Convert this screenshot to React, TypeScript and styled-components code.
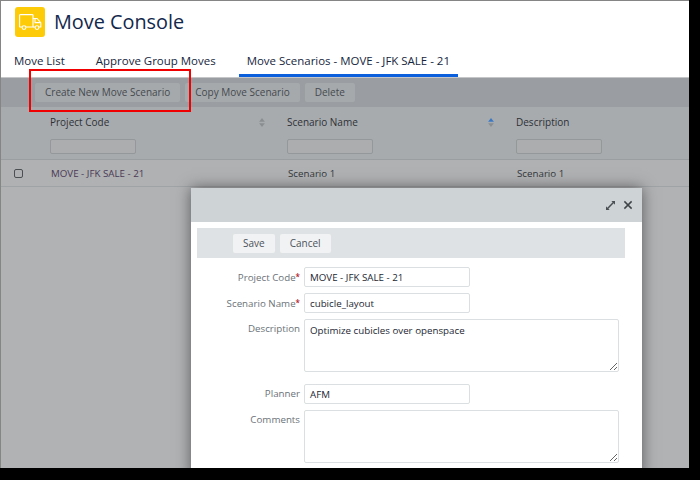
import { createGlobalStyle } from 'styled-components';
import styled from 'styled-components';

const GlobalStyle = createGlobalStyle`
  html, body {
    margin: 0;
    padding: 0;
    height: 480px;
    background: #000;
    overflow: hidden;
  }
  body, input, textarea, button {
    font-family: 'Open Sans', 'Liberation Sans', sans-serif;
  }
`;

const Screen = styled.div`
  position: relative;
  width: 689px;
  height: 468px;
  overflow: hidden;
  box-sizing: border-box;
  background: #b1b2b4;
  border-top: 1px solid #858585;
  border-left: 1px solid #858585;
  display: flex;
  flex-direction: column;
`;

const Header = styled.header`
  background: #fff;
  height: 76px;
  flex: none;
  box-sizing: border-box;
  display: flex;
  flex-direction: column;
`;

const TitleRow = styled.div`
  display: flex;
  align-items: center;
  gap: 9px;
  padding: 6px 0 0 14px;
  height: 30px;
`;

const Logo = styled.div`
  width: 30px;
  height: 30px;
  border-radius: 3px;
  background: #fdcb08;
  display: flex;
  align-items: center;
  justify-content: center;
`;

const Title = styled.h1`
  margin: 0;
  font-size: 19.85px;
  line-height: 30px;
  font-weight: 500;
  color: #12284c;
`;

const Tabs = styled.nav`
  display: flex;
  margin-top: 8px;
  padding-left: 13px;
`;

const Tab = styled.div<{ $active?: boolean; $gap: number }>`
  height: 32px;
  box-sizing: border-box;
  margin-right: ${p => p.$gap}px;
  padding: ${p => (p.$active ? '0 8px' : '0')};
  border-bottom: 3px solid ${p => (p.$active ? '#0b5fdc' : 'transparent')};
  font-size: 11.47px;
  line-height: 31px;
  font-weight: 500;
  color: #16263d;
  white-space: nowrap;
`;

const Toolbar = styled.div`
  flex: none;
  height: 30px;
  box-sizing: border-box;
  border-top: 1px solid #c5c6c8;
  background: #9a9da1;
  display: flex;
  align-items: center;
  gap: 5px;
  padding-left: 34px;
`;

const DimButton = styled.div`
  height: 19px;
  padding: 0 10px;
  border-radius: 2px;
  background: #a6a9ac;
  color: #44494f;
  font-size: 10px;
  line-height: 19px;
  font-weight: 500;
  white-space: nowrap;
`;

const TableHead = styled.div`
  flex: none;
  height: 53px;
  box-sizing: border-box;
  background: #a8abae;
  border-bottom: 1px solid #9b9ea1;
  display: grid;
  grid-template-columns: 49px 237px 229px 1fr;
`;

const HeadCell = styled.div<{ $col: number }>`
  grid-column: ${p => p.$col};
  display: flex;
  flex-direction: column;
  gap: 10px;
  padding-top: 8px;
  position: relative;
`;

const HeadLabel = styled.div`
  font-size: 10px;
  line-height: 14px;
  font-weight: 500;
  color: #2d3136;
`;

const SortIcon = styled.svg`
  position: absolute;
  right: 22px;
  top: 11px;
`;

const FilterBox = styled.div`
  width: 86px;
  height: 15px;
  box-sizing: border-box;
  border: 1px solid #94989b;
  border-radius: 2px;
  background: #acadae;
`;

const TableRow = styled.div`
  flex: none;
  height: 27px;
  box-sizing: border-box;
  background: #b0b1b3;
  border-bottom: 1px solid #a0a3a5;
  display: grid;
  grid-template-columns: 13px 36px 237px 229px 1fr;
  align-items: center;
`;

const CheckBox = styled.div`
  grid-column: 2;
  width: 9px;
  height: 9px;
  box-sizing: border-box;
  border: 1px solid #4c4f52;
  border-radius: 2px;
`;

const RowCell = styled.div<{ $purple?: boolean }>`
  font-size: 9.75px;
  color: ${p => (p.$purple ? '#4a3a55' : '#33373b')};
  white-space: nowrap;
  padding-left: 1px;
`;

const Modal = styled.section`
  position: absolute;
  left: 190px;
  top: 187px;
  width: 451px;
  height: 290px;
  background: #fff;
  box-shadow: 0 0 14px rgba(0, 0, 0, 0.5);
`;

const ModalHeader = styled.div`
  height: 34px;
  background: #ced3d6;
  display: flex;
  align-items: center;
  justify-content: flex-end;
  gap: 8px;
  padding-right: 9px;
`;

const ModalBody = styled.div`
  padding: 6px 17px 0 6px;
`;

const ModalToolbar = styled.div`
  height: 30px;
  background: #dfe2e4;
  display: flex;
  align-items: center;
  gap: 5px;
  padding-left: 36px;
`;

const LightButton = styled.button`
  height: 19px;
  padding: 0 10px;
  border: 0;
  border-radius: 2px;
  background: #f1f2f3;
  color: #4b5159;
  font-size: 10px;
  line-height: 19px;
  font-weight: 500;
`;

const Form = styled.div`
  display: grid;
  grid-template-columns: 103px 1fr;
  column-gap: 4px;
  row-gap: 6px;
  margin-top: 9px;
`;

const Label = styled.label<{ $spaced?: boolean }>`
  font-size: 9.75px;
  line-height: 19px;
  color: #6b7278;
  text-align: right;
  white-space: nowrap;
  margin-top: ${p => (p.$spaced ? '6px' : '0')};

  b {
    color: #b3202c;
    font-size: 8px;
    font-weight: 600;
    vertical-align: 1px;
  }
`;

const Field = styled.div<{ $spaced?: boolean }>`
  width: 166px;
  height: 20px;
  box-sizing: border-box;
  border: 1px solid #dcdfe1;
  border-radius: 2px;
  padding-left: 5px;
  font-size: 9.75px;
  line-height: 19px;
  color: #1d2733;
  margin-top: ${p => (p.$spaced ? '6px' : '0')};
`;

const Area = styled.textarea`
  display: block;
  width: 315px;
  height: 53px;
  box-sizing: border-box;
  border: 1px solid #dcdfe1;
  border-radius: 2px;
  padding: 4px 5px;
  margin: 0;
  font-size: 9.75px;
  line-height: 14px;
  color: #1d2733;
  outline: none;
`;

const Highlight = styled.div`
  position: absolute;
  left: 28px;
  top: 68px;
  width: 162px;
  height: 43px;
  box-sizing: border-box;
  border: 2px solid #f00000;
`;

function TruckIcon() {
  return (
    <svg width="23" height="17" viewBox="0 0 23 17" fill="none" stroke="#fff" strokeWidth="1.1">
      <path d="M3 13H1.2a.6.6 0 0 1-.6-.6V1.2a.6.6 0 0 1 .6-.6h12.2a.6.6 0 0 1 .6.6V13H7" />
      <path d="M14 4.5h4l3.8 4.2V13H20M16 13h-2" />
      <path d="M16 5v3.6h5" />
      <circle cx="5" cy="13.6" r="1.9" />
      <circle cx="18" cy="13.6" r="1.9" />
    </svg>
  );
}

function SortArrows({ active }: { active?: boolean }) {
  return (
    <SortIcon width="6" height="9" viewBox="0 0 7 11">
      <path d="M3.5 0 7 4.5H0Z" fill={active ? '#3b78c4' : '#8b8e91'} />
      <path d="M3.5 11 7 6.5H0Z" fill="#8b8e91" />
    </SortIcon>
  );
}

export default function App() {
  return (
    <>
      <GlobalStyle />
      <Screen>
        <Header>
          <TitleRow>
            <Logo>
              <TruckIcon />
            </Logo>
            <Title>Move Console</Title>
          </TitleRow>
          <Tabs>
            <Tab $gap={31}>Move List</Tab>
            <Tab $gap={23}>Approve Group Moves</Tab>
            <Tab $gap={0} $active>
              Move Scenarios - MOVE - JFK SALE - 21
            </Tab>
          </Tabs>
        </Header>

        <Toolbar>
          <DimButton>Create New Move Scenario</DimButton>
          <DimButton>Copy Move Scenario</DimButton>
          <DimButton>Delete</DimButton>
        </Toolbar>

        <TableHead>
          <HeadCell $col={2}>
            <HeadLabel>Project Code</HeadLabel>
            <FilterBox />
            <SortArrows />
          </HeadCell>
          <HeadCell $col={3}>
            <HeadLabel>Scenario Name</HeadLabel>
            <FilterBox />
            <SortArrows active />
          </HeadCell>
          <HeadCell $col={4}>
            <HeadLabel>Description</HeadLabel>
            <FilterBox />
          </HeadCell>
        </TableHead>

        <TableRow>
          <CheckBox />
          <RowCell $purple>MOVE - JFK SALE - 21</RowCell>
          <RowCell>Scenario 1</RowCell>
          <RowCell>Scenario 1</RowCell>
        </TableRow>

        <Modal>
          <ModalHeader>
            <svg width="9" height="9" viewBox="0 0 11 11" fill="#4a4f54">
              <path d="M6.5 0H11V4.5L9.4 2.9 2.9 9.4 4.5 11H0V6.5L1.6 8.1 8.1 1.6Z" />
            </svg>
            <svg width="10" height="10" viewBox="0 0 11 11" stroke="#3f4448" strokeWidth="1.6">
              <path d="M1.5 1.5l8 8M9.5 1.5l-8 8" />
            </svg>
          </ModalHeader>
          <ModalBody>
            <ModalToolbar>
              <LightButton>Save</LightButton>
              <LightButton>Cancel</LightButton>
            </ModalToolbar>
            <Form>
              <Label>
                Project Code<b>*</b>
              </Label>
              <Field>MOVE - JFK SALE - 21</Field>
              <Label>
                Scenario Name<b>*</b>
              </Label>
              <Field>cubicle_layout</Field>
              <Label>Description</Label>
              <Area readOnly defaultValue="Optimize cubicles over openspace" />
              <Label $spaced>Planner</Label>
              <Field $spaced>AFM</Field>
              <Label>Comments</Label>
              <Area readOnly />
            </Form>
          </ModalBody>
        </Modal>

        <Highlight />
      </Screen>
    </>
  );
}
